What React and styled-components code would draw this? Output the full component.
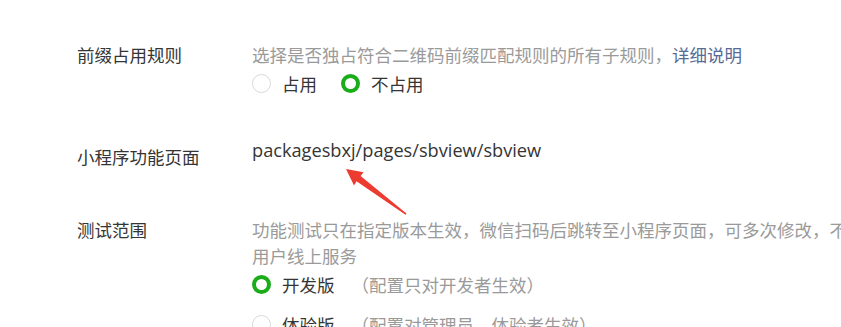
import React from 'react';
import styled, { createGlobalStyle } from 'styled-components';

const GlobalStyle = createGlobalStyle`
  html, body {
    margin: 0;
    padding: 0;
    background: #ffffff;
    overflow: hidden;
  }
  body {
    font-family: "Noto Sans CJK SC", "Noto Sans", sans-serif;
  }
`;

const Page = styled.div`
  position: relative;
  width: 841px;
  height: 327px;
  overflow: hidden;
  padding: 42px 0 0 77px;
  box-sizing: border-box;
  font-size: 17.5px;
  color: #353535;
`;

const Row = styled.div`
  display: flex;
  align-items: flex-start;
  margin-top: ${props => props.gap || 0}px;
`;

const Label = styled.div`
  flex: 0 0 175px;
  line-height: 26px;
  color: #353535;
  margin-top: ${props => props.offset || 0}px;
`;

const Content = styled.div`
  flex: 0 0 auto;
  width: ${props => props.width || 600}px;
`;

const Desc = styled.div`
  line-height: 26px;
  color: #9a9a9a;
`;

const Link = styled.a`
  color: #576b95;
  text-decoration: none;
`;

const Value = styled.div`
  font-family: "Open Sans", "Noto Sans CJK SC", sans-serif;
  font-size: 18.2px;
  line-height: 26px;
  color: #353535;
`;

const RadioGroup = styled.div`
  display: flex;
  flex-direction: ${props => (props.column ? 'column' : 'row')};
  gap: ${props => (props.column ? 10 : 24)}px;
  margin-top: ${props => props.offset || 0}px;
`;

const Option = styled.label`
  display: flex;
  align-items: center;
  height: 30px;
  gap: 11px;
  white-space: nowrap;
`;

const Circle = styled.span`
  width: 19px;
  height: 19px;
  border-radius: 50%;
  box-sizing: border-box;
  flex: 0 0 19px;
  border: ${props => (props.checked ? '4.5px solid #1aad19' : '1px solid #d9d9d9')};
  background: #ffffff;
`;

const Note = styled.span`
  color: #9a9a9a;
  margin-left: 17px;
`;

const Arrow = styled.svg`
  position: absolute;
  left: 0;
  top: 0;
  pointer-events: none;
`;

function Radio({ checked, children, note }) {
  return (
    <Option>
      <Circle checked={checked} />
      <span>
        {children}
        {note && <Note>{note}</Note>}
      </span>
    </Option>
  );
}

export default function App() {
  return (
    <>
      <GlobalStyle />
      <Page>
        <Row>
          <Label>前缀占用规则</Label>
          <Content width={600}>
            <Desc>
              选择是否独占符合二维码前缀匹配规则的所有子规则，<Link href="#">详细说明</Link>
            </Desc>
            <RadioGroup>
              <Radio>占用</Radio>
              <Radio checked>不占用</Radio>
            </RadioGroup>
          </Content>
        </Row>

        <Row gap={39}>
          <Label offset={7}>小程序功能页面</Label>
          <Content width={500}>
            <Value>packagesbxj/pages/sbview/sbview</Value>
          </Content>
        </Row>

        <Row gap={47}>
          <Label>测试范围</Label>
          <Content width={635}>
            <Desc>功能测试只在指定版本生效，微信扫码后跳转至小程序页面，可多次修改，不影响用户线上服务</Desc>
            <RadioGroup column>
              <Radio checked note="（配置只对开发者生效）">开发版</Radio>
              <Radio note="（配置对管理员、体验者生效）">体验版</Radio>
            </RadioGroup>
          </Content>
        </Row>

        <Arrow width="841" height="327" viewBox="0 0 841 327">
          <polygon
            points="346,169 363.6,172.2 360.6,176 406.5,213.5 405.5,214.8 356.5,181.2 354,185.5"
            fill="#ec3b30"
          />
        </Arrow>
      </Page>
    </>
  );
}
